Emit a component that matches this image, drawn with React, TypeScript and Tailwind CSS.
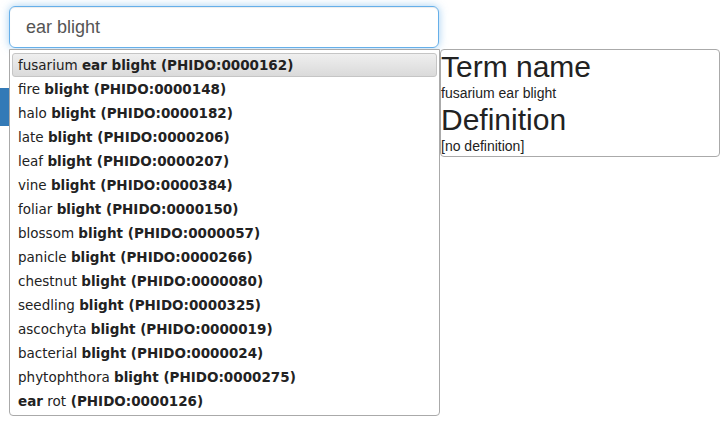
import React from "react";

const items: { pre: string; bold: string; post: string; id: string }[] = [
  { pre: "fusarium ", bold: "ear blight", post: "", id: "0000162" },
  { pre: "fire ", bold: "blight", post: "", id: "0000148" },
  { pre: "halo ", bold: "blight", post: "", id: "0000182" },
  { pre: "late ", bold: "blight", post: "", id: "0000206" },
  { pre: "leaf ", bold: "blight", post: "", id: "0000207" },
  { pre: "vine ", bold: "blight", post: "", id: "0000384" },
  { pre: "foliar ", bold: "blight", post: "", id: "0000150" },
  { pre: "blossom ", bold: "blight", post: "", id: "0000057" },
  { pre: "panicle ", bold: "blight", post: "", id: "0000266" },
  { pre: "chestnut ", bold: "blight", post: "", id: "0000080" },
  { pre: "seedling ", bold: "blight", post: "", id: "0000325" },
  { pre: "ascochyta ", bold: "blight", post: "", id: "0000019" },
  { pre: "bacterial ", bold: "blight", post: "", id: "0000024" },
  { pre: "phytophthora ", bold: "blight", post: "", id: "0000275" },
  { pre: "", bold: "ear", post: " rot", id: "0000126" },
];

export default function App() {
  return (
    <div className="relative w-[728px] h-[422px] bg-white overflow-hidden" style={{ fontFamily: '"Liberation Sans", Arial, sans-serif' }}>
      {/* blue block peeking from behind the menu */}
      <div className="absolute left-0 top-[88px] w-[10px] h-[38px] bg-[#337ab7]" />

      <div className="relative pl-[9px] pt-[6px]">
        <div className="w-[430px] h-[42px] border border-[#66afe9] rounded-[6px] flex items-center pl-[16px] text-[18px] text-[#555] shadow-[inset_0_1px_1px_rgba(0,0,0,0.075),0_0_8px_rgba(102,175,233,0.6)]">
          ear blight
        </div>

        <div className="flex mt-[1px] items-start">
          <div
            className="w-[431px] border border-[#aaaaaa] rounded-b-[4px] bg-white pt-[3px] pb-[2px] px-[2px] text-[13.5px] text-[#222]"
            style={{ fontFamily: 'Verdana, "DejaVu Sans", sans-serif' }}
          >
            {items.map((it, i) => (
              <div
                key={i}
                className={
                  i === 0
                    ? "h-[24px] flex items-center pl-[5px] border border-[#c5c5c5] rounded-[3px] bg-gradient-to-b from-[#efefef] to-[#dadada] text-[#212121]"
                    : "h-[24px] flex items-center pl-[6px] whitespace-nowrap"
                }
              >
                <span className="whitespace-nowrap">
                  {it.pre}
                  <b className="font-bold">{it.bold}</b>
                  {it.post}
                  <b className="font-bold"> (PHIDO:{it.id})</b>
                </span>
              </div>
            ))}
          </div>

          <div className="w-[280px] border border-[#aaaaaa] rounded-[4px] text-[#222]">
            <div className="text-[30px] leading-[33px]">Term name</div>
            <div className="text-[14px] leading-[20px]">fusarium ear blight</div>
            <div className="text-[30px] leading-[33px]">Definition</div>
            <div className="text-[14px] leading-[20px]">[no definition]</div>
          </div>
        </div>
      </div>
    </div>
  );
}
